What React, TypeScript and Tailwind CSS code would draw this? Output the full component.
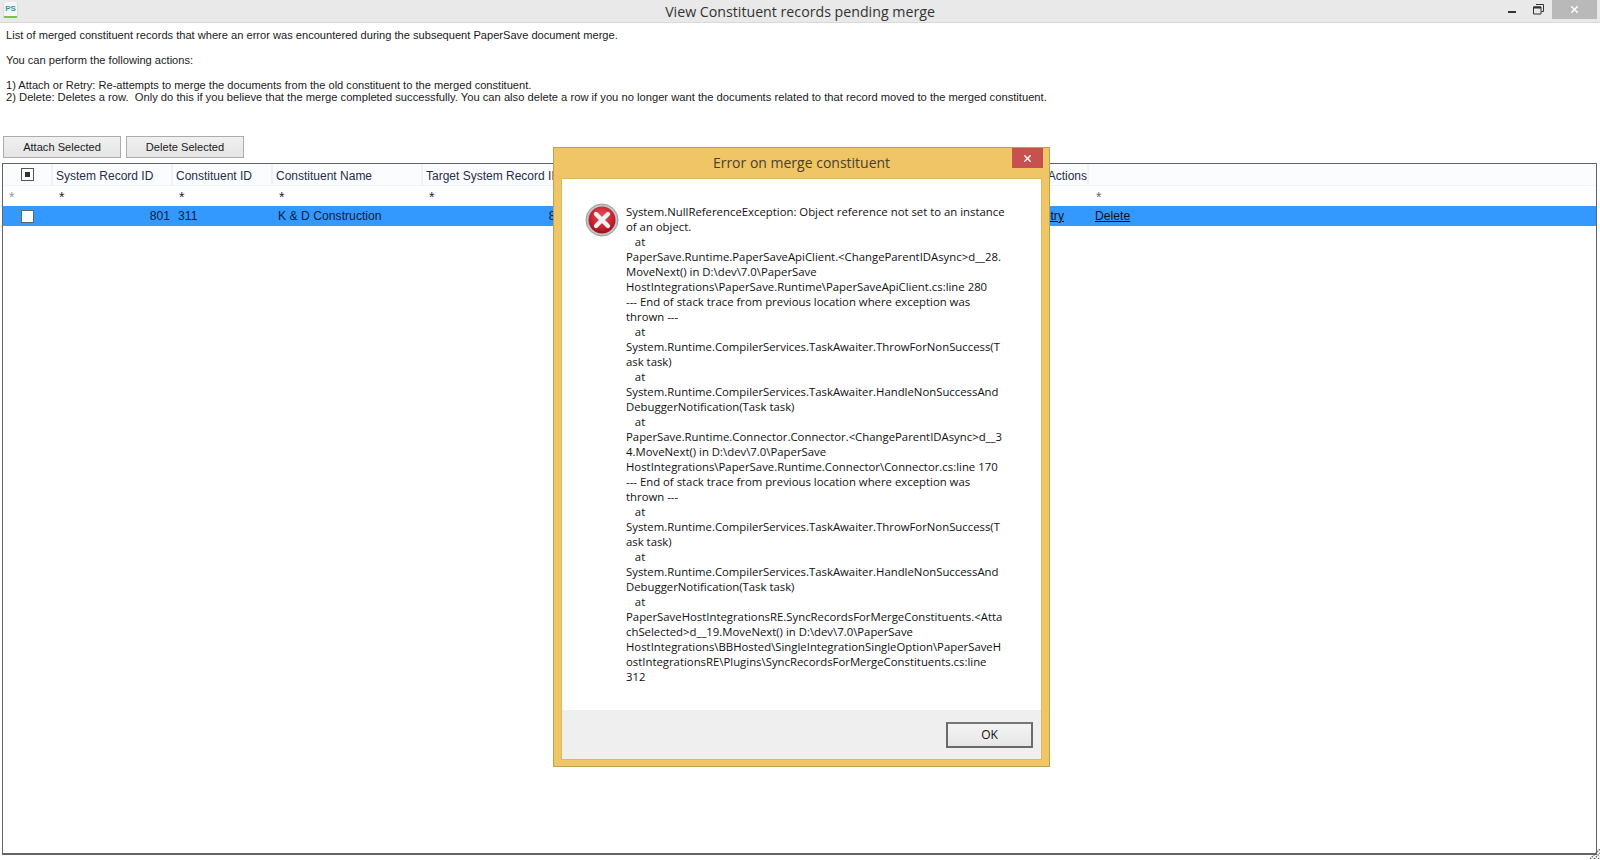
import { X } from 'lucide-react';

const stackTrace = [
    'System.NullReferenceException: Object reference not set to an instance',
    'of an object.',
    '   at',
    'PaperSave.Runtime.PaperSaveApiClient.<ChangeParentIDAsync>d__28.',
    'MoveNext() in D:\\dev\\7.0\\PaperSave',
    'HostIntegrations\\PaperSave.Runtime\\PaperSaveApiClient.cs:line 280',
    '--- End of stack trace from previous location where exception was',
    'thrown ---',
    '   at',
    'System.Runtime.CompilerServices.TaskAwaiter.ThrowForNonSuccess(T',
    'ask task)',
    '   at',
    'System.Runtime.CompilerServices.TaskAwaiter.HandleNonSuccessAnd',
    'DebuggerNotification(Task task)',
    '   at',
    'PaperSave.Runtime.Connector.Connector.<ChangeParentIDAsync>d__3',
    '4.MoveNext() in D:\\dev\\7.0\\PaperSave',
    'HostIntegrations\\PaperSave.Runtime.Connector\\Connector.cs:line 170',
    '--- End of stack trace from previous location where exception was',
    'thrown ---',
    '   at',
    'System.Runtime.CompilerServices.TaskAwaiter.ThrowForNonSuccess(T',
    'ask task)',
    '   at',
    'System.Runtime.CompilerServices.TaskAwaiter.HandleNonSuccessAnd',
    'DebuggerNotification(Task task)',
    '   at',
    'PaperSaveHostIntegrationsRE.SyncRecordsForMergeConstituents.<Atta',
    'chSelected>d__19.MoveNext() in D:\\dev\\7.0\\PaperSave',
    'HostIntegrations\\BBHosted\\SingleIntegrationSingleOption\\PaperSaveH',
    'ostIntegrationsRE\\Plugins\\SyncRecordsForMergeConstituents.cs:line',
    '312',
];

function ErrorIcon() {
    return (
        <svg width="34" height="34" viewBox="0 0 34 34">
            <defs>
                <radialGradient id="errFill" cx="50%" cy="35%" r="70%">
                    <stop offset="0%" stopColor="#e8505a" />
                    <stop offset="65%" stopColor="#c11f2c" />
                    <stop offset="100%" stopColor="#8e0f1a" />
                </radialGradient>
            </defs>
            <circle cx="17" cy="17" r="16" fill="#c4c4c4" stroke="#9a9a9a" strokeWidth="1" />
            <circle cx="17" cy="17" r="13.5" fill="url(#errFill)" />
            <path d="M11 11 L23 23 M23 11 L11 23" stroke="#f2f2f2" strokeWidth="4.4" strokeLinecap="round" />
        </svg>
    );
}

function WindowControls() {
    return (
        <div className="flex items-start">
            <div className="w-[8px] h-[2px] bg-[#333] mt-[11px] mr-[17px]" />
            <svg width="11" height="11" viewBox="0 0 11 11" className="mt-[4px] mr-[8px]">
                <path d="M3 .5 H10.5 V7.5 H8.5 M.5 3 H8 V10 H.5 Z" fill="none" stroke="#333" />
                <path d="M.5 3.5 H8" stroke="#333" strokeWidth="2" />
            </svg>
            <div className="w-[45px] h-[19px] bg-[#b9b9b9] flex items-center justify-center text-white">
                <X size={11} strokeWidth={3} />
            </div>
        </div>
    );
}

function GridRow({ className, cells }: { className: string; cells: React.ReactNode[] }) {
    const widths = ['w-[50px]', 'w-[120px]', 'w-[100px]', 'w-[150px]', 'w-[150px]', 'w-[516px]'];
    return (
        <div className={`flex ${className}`}>
            {cells.map((c, i) => (
                <div key={i} className={`${widths[i] ?? 'flex-1'} shrink-0 h-full flex items-center`}>
                    {c}
                </div>
            ))}
        </div>
    );
}

function ToolButton({ label }: { label: string }) {
    return (
        <button className="w-[118px] h-[22px] border border-[#acacac] bg-gradient-to-b from-[#f0f0f0] to-[#e5e5e5] text-[11.1px] text-[#1a1a1a]">
            {label}
        </button>
    );
}

export default function App() {
    const headerCell = 'h-full w-full flex items-center pl-[3px] pt-[2px] border-r-2 border-[#edf3fb] whitespace-nowrap overflow-hidden';
    const star = 'pl-[6px] pt-[2px] text-[14px] text-[#223]';

    return (
        <div className="relative w-[1600px] h-[860px] overflow-hidden bg-white flex flex-col font-['Liberation_Sans',sans-serif] text-[12px] text-[#1a1a1a]">
            {/* Title bar */}
            <div className="h-[23px] shrink-0 bg-[#e9e9e9] border-b border-[#d9d9d9] flex items-start justify-between pl-[3px] pr-[3px]">
                <div className="w-[15px] h-[16px] mt-[2px] rounded-[2px] bg-[#f4f6f4] border-b-2 border-[#7cc24a] border-x border-x-[#dcdcdc] flex items-center justify-center text-[8px] font-bold text-[#2a9d9d]">
                    PS
                </div>
                <div className="absolute left-0 right-0 top-0 h-[23px] flex items-center justify-center font-['Open_Sans',sans-serif] text-[14.2px] text-[#333]">
                    View Constituent records pending merge
                </div>
                <div className="relative">
                    <WindowControls />
                </div>
            </div>

            {/* Instructions */}
            <div className="pl-[6px] pt-[6px] leading-[13px] h-[113px] shrink-0 whitespace-pre text-[11.1px]">
                <p>List of merged constituent records that where an error was encountered during the subsequent PaperSave document merge.</p>
                <p className="mt-[12px]">You can perform the following actions:</p>
                <p className="mt-[12px]">1) Attach or Retry: Re-attempts to merge the documents from the old constituent to the merged constituent.</p>
                <p className="-mt-px text-[11.2px]">2) Delete: Deletes a row.  Only do this if you believe that the merge completed successfully. You can also delete a row if you no longer want the documents related to that record moved to the merged constituent.</p>
            </div>

            {/* Toolbar */}
            <div className="flex gap-[5px] pl-[3px] shrink-0">
                <ToolButton label="Attach Selected" />
                <ToolButton label="Delete Selected" />
            </div>

            {/* Grid */}
            <div className="mt-[5px] ml-[2px] mr-[3px] h-[692px] shrink-0 border border-[#646464] border-b-2 border-r">
                <GridRow
                    className="h-[22px] bg-[#fbfcfe] border-b border-[#edf3fb] text-[#1e2f4a]"
                    cells={[
                        <div className="h-full w-full flex items-center justify-center border-r-2 border-[#edf3fb]">
                            <div className="w-[13px] h-[13px] border border-[#555] bg-white flex items-center justify-center">
                                <div className="w-[5px] h-[5px] bg-[#333]" />
                            </div>
                        </div>,
                        <div className={headerCell}>System Record ID</div>,
                        <div className={headerCell}>Constituent ID</div>,
                        <div className={headerCell}>Constituent Name</div>,
                        <div className={headerCell}>Target System Record ID</div>,
                        <div className={`${headerCell} justify-end !pr-0`}>Actions</div>,
                        <div className="h-full w-full" />,
                    ]}
                />
                <GridRow
                    className="h-[20px] text-[#666] bg-white"
                    cells={[
                        <span className="pl-[6px] pt-[2px] text-[14px] text-[#999]">*</span>,
                        <span className={star}>*</span>,
                        <span className={star}>*</span>,
                        <span className={star}>*</span>,
                        <span className={star}>*</span>,
                        <span />,
                        <span className="pl-[7px] pt-[2px] text-[14px] text-[#666]">*</span>,
                    ]}
                />
                <GridRow
                    className="h-[20px] bg-[#3399ff] text-[#10203a] text-[12.2px]"
                    cells={[
                        <div className="w-full flex justify-center pr-[2px]">
                            <div className="w-[13px] h-[13px] border border-[#666] bg-white" />
                        </div>,
                        <span className="w-full text-right pr-[3px]">801</span>,
                        <span className="pl-[5px]">311</span>,
                        <span className="pl-[5px]">K &amp; D Construction</span>,
                        <span className="w-full text-right pr-[4px]">801</span>,
                        <span className="w-full text-right pr-[25px] underline text-[#111]">Retry</span>,
                        <span className="pl-[6px] underline text-[#111]">Delete</span>,
                    ]}
                />
            </div>

            {/* Resize grip */}
            <svg width="10" height="10" viewBox="0 0 10 10" className="absolute right-0 bottom-[1px]">
                <path d="M0 10 L10 0 M4 10 L10 4 M8 10 L10 8" stroke="#666" strokeWidth="1.4" strokeDasharray="1.5 1" />
            </svg>

            {/* Error dialog */}
            <div className="absolute left-[553px] top-[147px] w-[497px] h-[620px] bg-[#efc566] border border-[#bfa04e] flex flex-col px-[7px] pb-[6px] font-['Open_Sans',sans-serif]">
                <div className="h-[30px] shrink-0 relative flex items-center justify-center pb-[2px] text-[14px] text-[#4a4030]">
                    Error on merge constituent
                    <div className="absolute right-[-1px] top-0 w-[31px] h-[20px] bg-[#c75050] flex items-center justify-center text-white">
                        <X size={11} strokeWidth={3} />
                    </div>
                </div>
                <div className="flex-1 flex flex-col bg-white border border-[#d8b860]">
                    <div className="flex-1 flex pt-[25px] pl-[23px]">
                        <div className="shrink-0 w-[41px] -mt-px">
                            <ErrorIcon />
                        </div>
                        <div className="text-[11.35px] leading-[15px] text-[#111] whitespace-pre">
                            {stackTrace.map((line, i) => (
                                <div key={i}>{line}</div>
                            ))}
                        </div>
                    </div>
                    <div className="h-[49px] shrink-0 bg-[#efefef] flex items-start justify-end pt-[12px] pr-[8px]">
                        <button className="w-[87px] h-[26px] border-2 border-[#6a6a6a] border-t-[#777] bg-gradient-to-b from-[#f4f4f4] to-[#e6e6e6] text-[12px] text-[#111]">
                            OK
                        </button>
                    </div>
                </div>
            </div>
        </div>
    );
}
